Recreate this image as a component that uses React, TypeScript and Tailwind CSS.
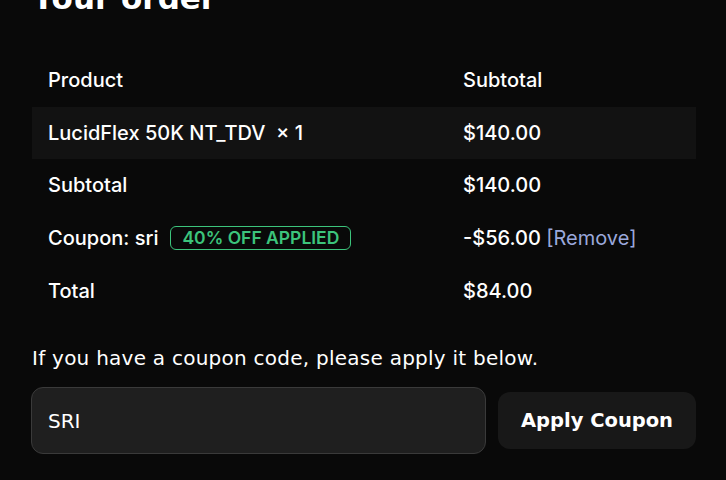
import React from 'react';

const wide = { fontFamily: '"DejaVu Sans", sans-serif' };
const inter = { fontFamily: 'Inter, "Noto Sans", sans-serif' };

export default function App() {
    return (
        <div className="min-h-[480px] w-[726px] overflow-hidden bg-[#090909] text-white">
            <div className="pl-8 pr-[30px]">
                {/* Heading, scrolled partly out of view */}
                <h2 className="-mt-[19px] text-[31px] leading-[34px] font-bold" style={wide}>
                    Your order
                </h2>

                {/* Order table */}
                <table className="mt-[38px] w-full border-collapse text-[20px] font-medium" style={inter}>
                    <thead>
                        <tr className="h-[54px]">
                            <th className="w-[415px] pl-4 text-left font-medium">Product</th>
                            <th className="pl-4 text-left font-medium">Subtotal</th>
                        </tr>
                    </thead>
                    <tbody>
                        <tr className="h-[52px] bg-[#121212]">
                            <td className="pl-4">LucidFlex 50K NT_TDV&nbsp; × 1</td>
                            <td className="pl-4">$140.00</td>
                        </tr>
                        <tr className="h-[52px]">
                            <td className="pl-4">Subtotal</td>
                            <td className="pl-4">$140.00</td>
                        </tr>
                        <tr className="h-[54px]">
                            <td className="pl-4">
                                <div className="flex items-center gap-3">
                                    <span>Coupon: sri</span>
                                    <span className="rounded-md border border-[#3cc47c] px-[11px] text-[17.5px] leading-[22px] font-semibold text-[#3cc47c]">
                                        40% OFF APPLIED
                                    </span>
                                </div>
                            </td>
                            <td className="pl-4">
                                -$56.00{' '}
                                <a className="font-normal text-[#9ba8dc]">[Remove]</a>
                            </td>
                        </tr>
                        <tr className="h-[52px]">
                            <td className="pl-4">Total</td>
                            <td className="pl-4">$84.00</td>
                        </tr>
                    </tbody>
                </table>

                {/* Coupon form */}
                <p className="mt-[27px] text-[20px] leading-[28px] tracking-[0.25px]" style={wide}>
                    If you have a coupon code, please apply it below.
                </p>
                <div className="mt-[15px] flex items-center gap-3">
                    <input
                        defaultValue="SRI"
                        className="h-[67px] w-[455px] shrink-0 -ml-px rounded-xl border border-[#3a3a3a] bg-[#1f1f1f] px-4 text-[20px] text-white outline-none"
                        style={wide}
                    />
                    <button
                        className="h-[57px] w-[198px] shrink-0 rounded-xl bg-[#181818] text-[19.5px] font-bold text-white"
                        style={wide}
                    >
                        Apply Coupon
                    </button>
                </div>
            </div>
        </div>
    );
}
